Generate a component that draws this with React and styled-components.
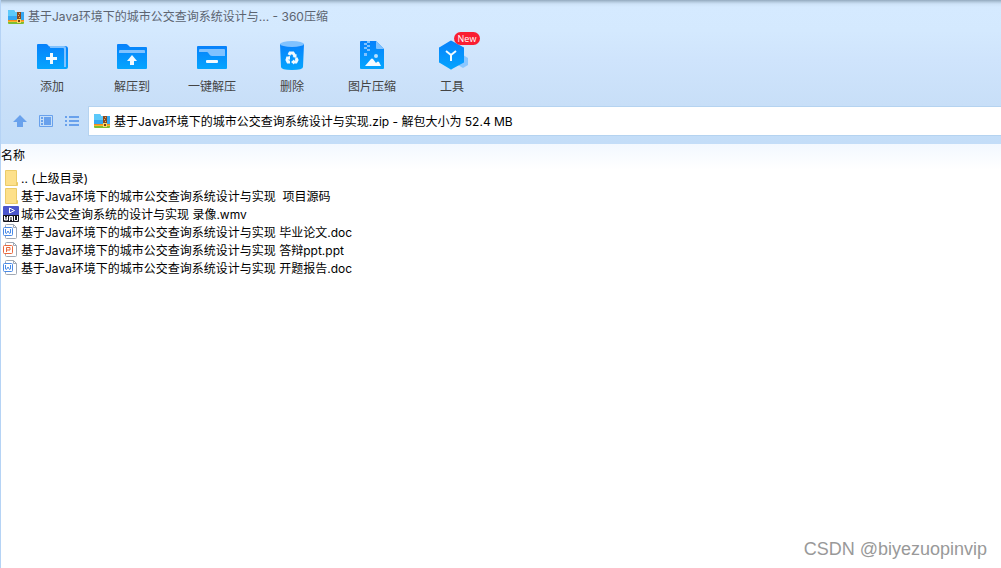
import React from 'react';
import styled, { createGlobalStyle } from 'styled-components';

const GlobalStyle = createGlobalStyle`
    * {
        box-sizing: border-box;
    }

    body {
        margin: 0;
        background: #ffffff;
        color: #000000;
        font-family: Inter, 'Noto Sans CJK SC', sans-serif;
        font-size: 12px;
        line-height: 18px;
    }

    button,
    input {
        font: inherit;
    }
`;

const Window = styled.div`
    position: relative;
    display: flex;
    flex-direction: column;
    min-height: 100vh;
    border-left: 1px solid #b5d3f5;
    overflow: hidden;
`;

const Header = styled.header`
    background: linear-gradient(#93a9be 0, #b4cade 2px, #cde2f7 4px, #d5eaff 7px, #d4e9fe 30px, #cfe4fc 60px, #c8dff8 104px, #c3ddf8 144px);
    padding-bottom: 8px;
`;

const TitleBar = styled.div`
    display: flex;
    align-items: center;
    gap: 4px;
    height: 33px;
    padding: 0 7px;
`;

const Title = styled.h1`
    margin: 0;
    color: #5c6470;
    font-size: 12px;
    font-weight: 400;
    white-space: pre;
`;

const Toolbar = styled.div`
    display: flex;
    padding-left: 11px;
`;

const Tool = styled.button`
    display: flex;
    flex-direction: column;
    align-items: center;
    gap: 6px;
    width: 80px;
    height: 73px;
    padding: 7px 0 0;
    border: 0;
    background: none;
    color: #444444;
    white-space: nowrap;
`;

const ToolIcon = styled.span`
    position: relative;
    display: block;
    height: 32px;

    svg {
        display: block;
        overflow: visible;
    }
`;

const Badge = styled.span`
    position: absolute;
    top: -8px;
    left: 18px;
    width: 26px;
    height: 13px;
    border-radius: 7px;
    background: #fa1e32;
    color: #ffffff;
    font-family: 'Open Sans', sans-serif;
    font-size: 9px;
    line-height: 13px;
    text-align: center;
`;

const AddressBar = styled.div`
    display: flex;
    align-items: center;
    height: 30px;
    padding-left: 9px;
`;

const NavButton = styled.button`
    display: grid;
    place-items: center;
    width: 20px;
    height: 20px;
    margin-right: 6px;
    padding: 0;
    border: 0;
    background: none;
    color: #69a1ec;
`;

const Address = styled.label`
    display: flex;
    flex: 1;
    align-items: center;
    gap: 4px;
    height: 30px;
    padding-left: 5px;
    border: 1px solid #b5d3f0;
    border-right: 0;
    background: #ffffff;
`;

const AddressInput = styled.input`
    flex: 1;
    min-width: 0;
    padding: 2px 0 0;
    border: 0;
    outline: 0;
    background: none;
    color: #000000;
`;

const FileTable = styled.table`
    width: 100%;
    border-collapse: collapse;
`;

const HeadCell = styled.th`
    height: 26px;
    padding: 0 0 2px;
    background: linear-gradient(#f2f8ff, #ffffff);
    font-weight: 400;
    text-align: left;
`;

const FileCell = styled.td`
    height: 18px;
    padding: 0 0 0 2px;
`;

const FileName = styled.div`
    display: flex;
    align-items: center;
    gap: 2px;
    white-space: pre;

    svg {
        flex: none;
        margin-bottom: 2px;
    }
`;

const Watermark = styled.div`
    position: absolute;
    right: 14px;
    bottom: 8px;
    color: #999999;
    font-family: 'Liberation Sans', Arial, sans-serif;
    font-size: 18px;
    line-height: 22px;
`;

const ArchiveIcon = () => (
    <svg width="16" height="16" viewBox="0 0 16 16" aria-hidden="true">
        <path d="M0 2q0-1 1-1h5l1 2h9v9H0z" fill="#35a7f2" />
        <path d="M0 2q0-1 1-1h5l1 2h2v4H0z" fill="#5cc9fa" />
        <path d="M0 11h16v1H0z" fill="#f28a1c" />
        <path d="M0 12h16v1H0z" fill="#fbb52d" />
        <path d="M0 13h16v1q0 1-1 1H1q-1 0-1-1z" fill="#7cbd32" />
        <path d="M9 3h4v11H9z" fill="#8b4a1f" />
        <path d="M11 4h1v1h-1zM10 6h1v1h-1zM11 8h1v1h-1z" fill="#e7b06c" />
        <path d="M9 10h4v4H9z" fill="#f9d768" />
        <path d="M10 11h2v2h-2z" fill="#754014" />
    </svg>
);

const Gradients = () => (
    <svg width="0" height="0" style={{ position: 'absolute' }} aria-hidden="true">
        <linearGradient id="blue" x1="0" y1="0" x2="0" y2="1">
            <stop offset="0" stopColor="#0781fb" />
            <stop offset="1" stopColor="#05a5fe" />
        </linearGradient>
    </svg>
);

const AddIcon = () => (
    <svg width="32" height="32" viewBox="0 0 32 32" aria-hidden="true">
        <path d="M13 6h16a3 3 0 0 1 3 3v18a2 2 0 0 1-2 2H13z" fill="url(#blue)" />
        <path d="M13 6h15a2 2 0 0 1 2 2v19h-4z" fill="#80c2ff" />
        <path d="M1 5q0-1 1-1h8q1 0 2 1l2 3h13q1 0 1 1v20H2q-1 0-1-1z" fill="url(#blue)" />
        <path d="M14 13h3v4h4v3h-4v4h-3v-4h-4v-3h4z" fill="#f1faff" />
    </svg>
);

const ExtractIcon = () => (
    <svg width="32" height="32" viewBox="0 0 32 32" aria-hidden="true">
        <path d="M1 5q0-1 1-1h8q1 0 2 1l2 2h16q1 0 1 1v20q0 1-1 1H2q-1 0-1-1z" fill="url(#blue)" />
        <path d="M3 13v-2q0-1 1-1h24q1 0 1 1v2z" fill="#80c2ff" />
        <path d="M16 15l5 6h-3v4h-4v-4h-3z" fill="#f1faff" />
    </svg>
);

const OneClickIcon = () => (
    <svg width="32" height="32" viewBox="0 0 32 32" aria-hidden="true">
        <rect x="1" y="6" width="30" height="23" rx="1" fill="url(#blue)" />
        <path d="M3 12v-2q0-1 1-1h24q1 0 1 1v6H16q-2 0-3-2-1-2-2-2z" fill="#80c2ff" />
        <rect x="10" y="20" width="12" height="3" rx="1" fill="#f1faff" />
    </svg>
);

const DeleteIcon = () => (
    <svg width="32" height="32" viewBox="0 0 32 32" aria-hidden="true">
        <path d="M4 4h24l-1 23q0 3-11 3T5 27z" fill="url(#blue)" />
        <ellipse cx="16" cy="4" rx="12" ry="3" fill="#80c2ff" />
        <g fill="none" stroke="#f1faff" strokeWidth="3">
            <path d="M13 15l1-2h3l2 3" />
            <path d="M20 18l1 2-1 2h-3" />
            <path d="M14 22h-2l-1-2 1-3" />
        </g>
        <path d="M20.500 14v4l-4-1zM18 19.500v5l-3-2.500zM10 17l4-1v4z" fill="#f1faff" />
    </svg>
);

const PictureIcon = () => (
    <svg width="32" height="32" viewBox="0 0 32 32" aria-hidden="true">
        <path d="M4 2q0-1 1-1h15l8 8v19q0 1-1 1H5q-1 0-1-1z" fill="url(#blue)" />
        <path d="M20 1l8 8h-7q-1 0-1-1z" fill="#80c2ff" />
        <path d="M11 1h3v2h-3zM8 3h3v2H8zM11 5h3v2h-3zM8 7h3v2H8zM11 9h3v2h-3zM8 13h3v3H8z" fill="#80c2ff" />
        <circle cx="20" cy="16" r="2" fill="#b7e1ff" />
        <path d="M9 26l6-7q1-1 2 0l3 4 1-1q1-1 2 0l2 4z" fill="#f5fbff" />
    </svg>
);

const ToolsIcon = () => (
    <svg width="32" height="32" viewBox="0 0 32 32" aria-hidden="true">
        <path d="M27 15l5 3v7l-5 3-5-3v-4z" fill="#8bc7ff" />
        <path d="M14 1q1-1 2 0l11 6q1 0 1 1v14q0 1-1 1l-11 6q-1 1-2 0L4 23q-1 0-1-1V8q0-1 1-1z" fill="url(#blue)" />
        <path d="M10 11l5 4 5-4M15 15v6" fill="none" stroke="#f1faff" strokeWidth="2" />
    </svg>
);

const UpIcon = () => (
    <svg width="14" height="14" viewBox="0 0 14 14" aria-hidden="true">
        <path d="M7 1l7 7h-4v5H4V8H0z" fill="currentColor" />
    </svg>
);

const PanelIcon = () => (
    <svg width="14" height="14" viewBox="0 0 14 14" aria-hidden="true">
        <path d="M.5 1.500h13v11H.5z" fill="none" stroke="currentColor" />
        <path d="M2 3h2v2H2zM2 6h2v2H2zM2 9h2v2H2zM5 3h7v8H5z" fill="currentColor" />
    </svg>
);

const ListIcon = () => (
    <svg width="14" height="14" viewBox="0 0 14 14" aria-hidden="true">
        <path d="M0 2h2v2H0zM0 6h2v2H0zM0 10h2v2H0zM4 2h10v2H4zM4 6h10v2H4zM4 10h10v2H4z" fill="currentColor" />
    </svg>
);

const FolderIcon = () => (
    <svg width="16" height="16" viewBox="0 0 16 16" aria-hidden="true">
        <path d="M2.500.5h11v11l1 1v3h-12z" fill="#fde08a" stroke="#ebcb68" />
        <path d="M13.500 11.500v4" stroke="#ebcb68" />
    </svg>
);

const VideoIcon = () => (
    <svg width="16" height="16" viewBox="0 0 16 16" aria-hidden="true">
        <path d="M0 1q0-1 1-1h14q1 0 1 1v8H0z" fill="#4b56cc" />
        <path d="M6.500 2l5 2.500-5 2.500z" fill="none" stroke="#ffffff" />
        <path d="M0 9h16v6q0 1-1 1H1q-1 0-1-1z" fill="#15151d" />
        <path d="M1.500 10v4h3v-4M3 11v3M6.500 15v-4.500h3V15M8 10v4M11.500 10v4.500h3V10" fill="none" stroke="#ffffff" />
    </svg>
);

const sheetColors = { W: '#4a8ae6', P: '#e9683f' };

const SheetIcon = ({ letter }) => (
    <svg width="16" height="16" viewBox="0 0 16 16" aria-hidden="true">
        <path d="M2.500 1.500q0-1 1-1h7l3 3v10q0 1-1 1h-9q-1 0-1-1z" fill="#ffffff" stroke="#a0a8b4" />
        <path d="M10.500.5v3h3" fill="none" stroke="#a0a8b4" />
        <rect x="0.500" y="3.500" width="9" height="8" rx="1" fill="#ffffff" stroke={sheetColors[letter]} />
        <path
            d={letter === 'W' ? 'M2.500 5v4l1 .5L5 7l1.500 2.500 1-.5V5' : 'M3.500 10V5.500H7v2.500H4'}
            fill="none"
            stroke={sheetColors[letter]}
        />
    </svg>
);

const tools = [
    { label: '添加', Icon: AddIcon },
    { label: '解压到', Icon: ExtractIcon },
    { label: '一键解压', Icon: OneClickIcon },
    { label: '删除', Icon: DeleteIcon },
    { label: '图片压缩', Icon: PictureIcon },
    { label: '工具', Icon: ToolsIcon, badge: 'New' },
];

const files = [
    { name: '.. (上级目录)', icon: <FolderIcon /> },
    { name: '基于Java环境下的城市公交查询系统设计与实现  项目源码', icon: <FolderIcon /> },
    { name: '城市公交查询系统的设计与实现 录像.wmv', icon: <VideoIcon /> },
    { name: '基于Java环境下的城市公交查询系统设计与实现 毕业论文.doc', icon: <SheetIcon letter="W" /> },
    { name: '基于Java环境下的城市公交查询系统设计与实现 答辩ppt.ppt', icon: <SheetIcon letter="P" /> },
    { name: '基于Java环境下的城市公交查询系统设计与实现 开题报告.doc', icon: <SheetIcon letter="W" /> },
];

const App = () => {
    return (
        <Window>
            <GlobalStyle />
            <Gradients />
            <Header>
                <TitleBar>
                    <ArchiveIcon />
                    <Title>基于Java环境下的城市公交查询系统设计与... - 360压缩</Title>
                </TitleBar>
                <Toolbar>
                    {tools.map(({ label, Icon, badge }) => (
                        <Tool key={label} type="button">
                            <ToolIcon>
                                <Icon />
                                {badge && <Badge>{badge}</Badge>}
                            </ToolIcon>
                            {label}
                        </Tool>
                    ))}
                </Toolbar>
                <AddressBar>
                    <NavButton type="button" aria-label="向上">
                        <UpIcon />
                    </NavButton>
                    <NavButton type="button" aria-label="预览">
                        <PanelIcon />
                    </NavButton>
                    <NavButton type="button" aria-label="列表">
                        <ListIcon />
                    </NavButton>
                    <Address>
                        <ArchiveIcon />
                        <AddressInput
                            aria-label="路径"
                            defaultValue="基于Java环境下的城市公交查询系统设计与实现.zip - 解包大小为 52.4 MB"
                        />
                    </Address>
                </AddressBar>
            </Header>
            <FileTable>
                <thead>
                    <tr>
                        <HeadCell scope="col">名称</HeadCell>
                    </tr>
                </thead>
                <tbody>
                    {files.map(({ name, icon }) => (
                        <tr key={name}>
                            <FileCell>
                                <FileName>
                                    {icon}
                                    {name}
                                </FileName>
                            </FileCell>
                        </tr>
                    ))}
                </tbody>
            </FileTable>
            <Watermark>CSDN @biyezuopinvip</Watermark>
        </Window>
    );
};

export default App;
